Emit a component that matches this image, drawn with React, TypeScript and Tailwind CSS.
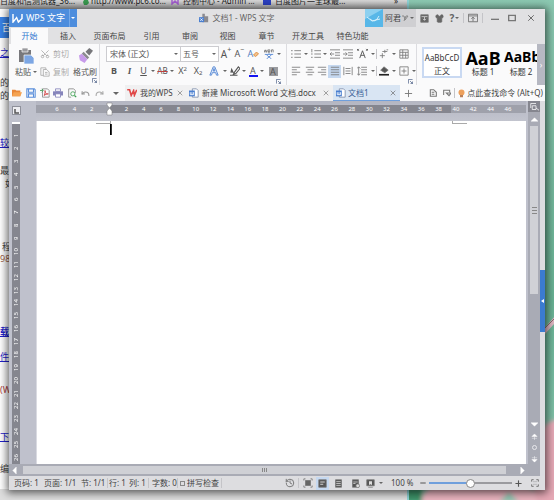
import React from "react";
import { History, Shirt, X, Plus, Minus, Scissors, Undo, Redo } from "lucide-react";

type Kids = { children?: React.ReactNode };

function Icon({ size = "size-[10px]", children }: Kids & { size?: string }) {
  return (
    <svg viewBox="0 0 12 12" className={`${size} shrink-0`} fill="none" stroke="#777" strokeWidth="1" aria-hidden="true">
      {children}
    </svg>
  );
}

function Caret() {
  return (
    <svg viewBox="0 0 4 2" className="h-[2px] w-[4px] shrink-0" aria-hidden="true">
      <path d="M0 0h4L2 2z" fill="#666" />
    </svg>
  );
}

function Tool({ w, label, active, children }: Kids & { w: string; label: string; active?: boolean }) {
  return (
    <button aria-label={label} className={`flex h-[13px] shrink-0 items-center justify-center ${w} ${active ? "bg-[#c5d8f0]" : ""}`}>
      {children}
    </button>
  );
}

function Drop({ label }: { label: string }) {
  return (
    <Tool w="w-[6px]" label={label}>
      <Caret />
    </Tool>
  );
}

function Rule() {
  return <span className="h-[10px] w-px shrink-0 bg-[#c4c4c8]" />;
}

function Launcher() {
  return (
    <Icon size="size-[5px]">
      <path d="M1 11V1h10M5 5l6 6M11 6v5H6" stroke="#5d6f92" strokeWidth="2" />
    </Icon>
  );
}

function Lines({ d, size = "size-[10px]" }: { d: string; size?: string }) {
  return (
    <Icon size={size}>
      <path d={d} stroke="#777" />
    </Icon>
  );
}

function WordDoc() {
  return (
    <Icon>
      <path d="M4 1h5l2 2v8H4z" fill="#fff" stroke="#7b8ba8" />
      <path d="M0 3h7v7H0z" fill="#4a7fd0" stroke="none" />
      <path d="M1.5 5v3h4V5M3.5 5v3" stroke="#fff" />
    </Icon>
  );
}

function Wallpaper() {
  return (
    <svg className="absolute inset-0 size-full" preserveAspectRatio="none" viewBox="0 0 554 500" aria-hidden="true">
      <defs>
        <linearGradient id="leaf" x1="0" y1="0" x2="0" y2="1">
          <stop offset="0" stopColor="#8cc9b2" />
          <stop offset="0.35" stopColor="#76b89d" />
          <stop offset="0.6" stopColor="#68b294" />
          <stop offset="0.85" stopColor="#80c1a8" />
        </linearGradient>
        <filter id="soft"><feGaussianBlur stdDeviation="2" /></filter>
      </defs>
      <rect width="554" height="500" fill="url(#leaf)" />
      <g filter="url(#soft)">
        <ellipse cx="480" cy="500" rx="58" ry="24" fill="#eab4bf" />
        <ellipse cx="556" cy="470" rx="24" ry="50" fill="#e6a9b6" />
        <path d="M400 488h22v14h-22z" fill="#3c9268" />
        <path d="M509 492l10 10h-20z" fill="#8cc4b0" />
      </g>
      <path d="M543 330l12-14v7l-10 11z" fill="#dfb8c3" />
      <path d="M545 328l9-9" stroke="#8c6a70" />
    </svg>
  );
}

const pageLines = [
  { text: "之套", cls: "mt-[9px] text-[#2222cc] underline" },
  { text: "的使", cls: "mt-[18px]" },
  { text: "的编", cls: "mt-px" },
  { text: "较全", cls: "mt-[35px] text-[#2222cc] underline" },
  { text: "最新", cls: "mt-[16px]" },
  { text: "如", cls: "mt-px pl-[5px]" },
  { text: "程", cls: "mt-[51px] pl-[2px]" },
  { text: "983", cls: "text-[#9b5c44]" },
  { text: "载", cls: "mt-[61px] font-bold text-[#2222cc] underline" },
  { text: "件大", cls: "mt-[13px] text-[#2222cc] underline" },
  { text: "(W", cls: "mt-[21px] text-[#b04040]" },
  { text: "下载", cls: "mt-[35px] text-[#2222cc] underline" },
  { text: "编辑", cls: "mt-[20px]" },
];

function Browser() {
  return (
    <div className="absolute inset-y-0 left-0 flex w-[409px] flex-col overflow-hidden border-r-2 border-[#8ed3d6] bg-white">
      <div className="flex h-[9px] shrink-0 items-start overflow-hidden whitespace-nowrap bg-linear-to-b from-[#d8d8d8] to-[#a8a8a8] leading-[10px] text-[#222]">
        <span className="-mt-1 w-[82px] shrink-0">百度和信测试器_36...</span>
        <svg viewBox="0 0 8 5" className="mr-px h-[5px] w-[8px] shrink-0" aria-hidden="true"><path d="M2 0h4l1 3-2 2H2L1 2z" fill="#3a9a50" /></svg>
        <span className="-mt-1 w-[80px] shrink-0">http://www.pc6.co...</span>
        <svg viewBox="0 0 8 5" className="mr-[4px] h-[5px] w-[8px] shrink-0" fill="none" stroke="#a45fd0" strokeWidth="1.500" aria-hidden="true"><path d="M1 0v4l3-3 3 3V0" /></svg>
        <span className="-mt-1 w-[80px] shrink-0">控制中心 - Admin ...</span>
        <span className="mr-[4px] h-[5px] w-[8px] shrink-0 bg-[#2b40c0]" />
        <span className="-mt-1 grow">百度图片—全球最...</span>
        <span className="-mt-1 pr-[9px]">»</span>
      </div>
      <div className="mt-[8px] h-[21px] w-[30px] shrink-0 bg-[#3a84e8] pl-[2px] text-[9px] leading-[21px] text-white">百</div>
      {pageLines.map((l) => (
        <div key={l.text} className={`h-[12px] shrink-0 text-[9px] leading-[12px] ${l.cls}`}>{l.text}</div>
      ))}
      <div className="mt-[14px] grow bg-[#dedede]" />
    </div>
  );
}

function TitleBar() {
  return (
    <header className="flex h-[18px] shrink-0 items-center">
      <button className="flex h-full w-[68px] shrink-0 items-center bg-[#4d8ddd] text-[9px] text-white">
        <svg viewBox="0 0 12 10" className="ml-[3px] h-[9px] w-[11px]" fill="none" stroke="#fff" strokeWidth="1.6" aria-hidden="true">
          <path d="M1 0v9l4-5 2 5 4-4V0" />
        </svg>
        <span className="ml-[3px] grow text-left">WPS 文字</span>
        <span className="flex h-full w-[8px] items-center border-l border-[#76a9e8]">
          <svg viewBox="0 0 4 2" className="ml-px h-[2px] w-[4px]" aria-hidden="true"><path d="M0 0h4L2 2z" fill="#fff" /></svg>
        </span>
      </button>
      <div className="flex grow items-center justify-center gap-[3px] pl-[32px] text-[#666]">
        <Icon>
          <path d="M4 4V1h3v3h4v7H4z" fill="#8a8a90" stroke="none" />
          <path d="M0 5h6v6H0z" fill="#4a7fd0" stroke="none" />
          <path d="M1.5 6.500l3 3m0-3l-3 3" stroke="#fff" />
        </Icon>
        <h1>文档1 - WPS 文字</h1>
      </div>
      <svg viewBox="0 0 18 18" className="h-full w-[18px] shrink-0" role="img" aria-label="头像">
        <path d="M0 0h18v18H0z" fill="#58b7e8" />
        <path d="M0 0h18L0 10z" fill="#8dd0f0" />
        <path d="M2 8l5 4 8-2M5 10q5 5 9-3" stroke="#d6f1fc" fill="none" />
      </svg>
      <button className="flex h-full w-[33px] shrink-0 items-center justify-center gap-px bg-[#cfcfd2]">
        <span>阿君</span>
        <svg viewBox="0 0 7 7" className="size-[7px]" fill="none" stroke="#888" aria-hidden="true"><path d="M0 1h2l1 4 3-4H4L2 6" /></svg>
        <Caret />
      </button>
      <Tool w="w-[16px]" label="云同步">
        <Icon size="size-[9px]"><path d="M1 1h10v10H1z" fill="#666" /><path d="M2 3.500h8M6 4v4M4 6.500l2 2 2-2" stroke="#e1e1e3" /></Icon>
      </Tool>
      <Tool w="w-[14px]" label="皮肤"><Shirt size={9} fill="#666" color="#666" /></Tool>
      <button className="flex w-[17px] shrink-0 items-center justify-center gap-px text-[10px] font-bold text-[#666]" aria-label="帮助">?<Caret /></button>
      <Rule />
      <Tool w="w-[18px]" label="隐藏功能区">
        <Icon><path d="M0.500 1.500h11v9h-11zM1 3.500h10M6 10V5M4 7l2-2 2 2" stroke="#666" /></Icon>
      </Tool>
      <Rule />
      <Tool w="w-[24px]" label="最小化"><Icon size="size-[8px]"><path d="M0 8h12" strokeWidth="2" /></Icon></Tool>
      <Tool w="w-[10px]" label="最大化"><Icon size="size-[8px]"><path d="M1 2h10v8H1z" strokeWidth="2" /></Icon></Tool>
      <Tool w="w-[28px]" label="关闭"><X size={10} color="#555" /></Tool>
    </header>
  );
}

const menus = [
  { name: "插入", w: "w-[40px]" },
  { name: "页面布局", w: "w-[43px]" },
  { name: "引用", w: "w-[41px]" },
  { name: "审阅", w: "w-[36px]" },
  { name: "视图", w: "w-[39px]" },
  { name: "章节", w: "w-[39px]" },
  { name: "开发工具", w: "w-[44px]" },
  { name: "特色功能", w: "w-[45px]" },
];

function Menu() {
  return (
    <nav className="flex h-[17px] shrink-0 items-stretch pl-[2px]">
      <button className="mt-px w-[37px] bg-[#fafafb] text-[#2f76cf]">开始</button>
      {menus.map((m) => (
        <button key={m.name} className={`mt-px shrink-0 whitespace-nowrap ${m.w}`}>{m.name}</button>
      ))}
    </nav>
  );
}

function Ribbon() {
  return (
    <section className="flex h-[41px] shrink-0 bg-[#fafafb] text-[#555]">
      <div className="flex w-[91px] shrink-0 flex-col items-end border-r border-[#dcdce0]">
        <div className="flex h-[34px] w-full pl-[3px] pt-[4px]">
          <button className="flex w-[28px] shrink-0 flex-col items-center justify-between">
            <svg viewBox="0 0 16 16" className="size-[16px]" aria-hidden="true">
              <path d="M1 2h12v12H1z" fill="#78787c" /><path d="M4 0h6v4H4z" fill="#9a9a9e" stroke="#fafafb" strokeWidth=".7" />
              <path d="M6 7h7l3 3v6H6z" fill="#7ca6e4" stroke="#fafafb" strokeWidth=".7" />
            </svg>
            <span className="flex items-center gap-[2px] whitespace-nowrap leading-[12px]">粘贴<Caret /></span>
          </button>
          <div className="flex w-[31px] shrink-0 flex-col justify-between text-[#aaa]">
            <button className="flex items-center gap-[3px] whitespace-nowrap leading-[12px]"><Scissors size={10} className="-rotate-90" />剪切</button>
            <button className="flex items-center gap-[3px] whitespace-nowrap leading-[12px]">
              <Icon><path d="M4 10H1V1h6v2M4 3h4l3 3v5H4zM6 6.500h3M6 8.500h3" stroke="#aaa" /></Icon>复制
            </button>
          </div>
          <button className="flex w-[28px] shrink-0 flex-col items-center justify-between">
            <svg viewBox="0 0 16 16" className="size-[15px]" aria-hidden="true">
              <path d="M12 0l4 3-4 5-4-4z" fill="#77777b" /><path d="M6 4l6 6-2 2-6-6z" fill="#8c8c90" /><path d="M1 8l3-2 6 6-3 4-5-3z" fill="#c79bea" />
            </svg>
            <span className="whitespace-nowrap leading-[12px]">格式刷</span>
          </button>
        </div>
        <span className="mr-[2px]"><Launcher /></span>
      </div>

      <div className="flex w-[187px] shrink-0 flex-col items-end border-r border-[#dcdce0] pl-[6px]">
        <div className="flex h-[19px] w-full items-center">
          <label className="flex h-[16px] w-[75px] shrink-0 items-center border border-[#ccccd0] bg-white pr-[2px]">
            <select aria-label="字体" className="min-w-0 grow appearance-none pl-[3px]"><option>宋体 (正文)</option></select><Caret />
          </label>
          <label className="flex h-[16px] w-[38px] shrink-0 items-center border border-l-0 border-[#ccccd0] bg-white pr-[2px]">
            <select aria-label="字号" className="min-w-0 grow appearance-none pl-[2px]"><option>五号</option></select><Caret />
          </label>
          <Tool w="w-[14px]" label="增大字号"><span className="text-[10px]">A</span><sup className="text-[7px]">+</sup></Tool>
          <Tool w="w-[13px]" label="减小字号"><span className="text-[9px]">A</span><sup className="text-[7px]">−</sup></Tool>
          <Tool w="w-[15px]" label="清除格式">
            <span className="text-[9px] text-[#557fc0]">A</span>
            <Icon size="size-[6px]"><path d="M1 8l6-6 4 4-6 5z" fill="#f3c18a" stroke="#e0934a" strokeWidth="2" /></Icon>
          </Tool>
          <Tool w="w-[15px]" label="拼音指南">
            <Icon>
              <path d="M0 1l1 3 1-3 1 3 1-3M5 3h2V1H5v3h2M9 4V1h2v3" stroke="#777" />
              <path d="M1 6.500h10M6 5v1M3 7l6 5M9 7l-6 5" stroke="#4a7fd0" />
            </Icon>
          </Tool>
          <Drop label="拼音选项" />
        </div>
        <div className="flex h-[16px] w-full items-center text-[9px]">
          <Tool w="w-[16px]" label="加粗"><b>B</b></Tool>
          <Tool w="w-[15px]" label="倾斜"><i className="font-['Liberation_Serif',serif] font-bold">I</i></Tool>
          <Tool w="w-[13px]" label="下划线"><span className="underline">U</span></Tool>
          <Drop label="下划线样式" />
          <Tool w="w-[13px]" label="删除线"><span className="text-[8px] line-through decoration-[#c04040]">AB</span></Tool>
          <Drop label="删除线选项" />
          <Tool w="w-[15px]" label="上标">X<span className="mb-[4px] text-[6px]">2</span></Tool>
          <Tool w="w-[16px]" label="下标">X<span className="mt-[4px] text-[6px]">2</span></Tool>
          <Tool w="w-[16px]" label="文字效果">
            <Icon><path d="M1 11L5 1h2l4 10H9L8 8H4l-1 3z M5 6h2L6 3z" stroke="#4a7fd0" fill="#dfeafb" /></Icon>
          </Tool>
          <Drop label="文字效果选项" />
          <Tool w="w-[13px]" label="突出显示">
            <Icon><path d="M5 8l5-7 2 2-5 6-3 1zM1 8l1-4 2 4M1 7h3M0 11h9" strokeWidth="1.300" stroke="#555" /></Icon>
          </Tool>
          <Drop label="突出显示颜色" />
          <Tool w="w-[12px]" label="字体颜色"><span className="h-[11px] w-[9px] border-b-2 border-[#1515f0] text-center leading-[9px]">A</span></Tool>
          <Drop label="字体颜色选项" />
          <Tool w="w-[16px]" label="字符底纹"><span className="size-[9px] bg-[#9a9b9f] text-center leading-[9px]">A</span></Tool>
        </div>
        <span className="mr-[5px]"><Launcher /></span>
      </div>

      <div className="flex w-[130px] shrink-0 flex-col items-end border-r border-[#dcdce0] pl-[2px]">
        <div className="flex h-[19px] w-full items-center">
          <Tool w="w-[14px]" label="项目符号"><Lines d="M0 2h2M4 2h8M0 6h2M4 6h8M0 10h2M4 10h8" /></Tool>
          <Drop label="项目符号选项" />
          <Tool w="w-[13px]" label="编号"><Lines d="M1 0v4M4 2h8M0 6h2M4 6h8M0 10h2M4 10h8" /></Tool>
          <Drop label="编号选项" />
          <Tool w="w-[14px]" label="减少缩进"><Lines d="M0 1h12M6 4.500h6M6 7.500h6M0 11h12M0 6h5M2 4L0 6l2 2" /></Tool>
          <Tool w="w-[12px]" label="增加缩进"><Lines d="M0 1h12M6 4.500h6M6 7.500h6M0 11h12M0 6h5M3 4l2 2-2 2" /></Tool>
          <Tool w="w-[16px]" label="中文版式"><Icon size="size-[11px]"><path d="M3 11L6 3l3 8M4 8h4M0 1l2 2M12 1l-2 2M0 3l2-2M12 3l-2-2" stroke="#555" /></Icon></Tool>
          <Drop label="中文版式选项" />
          <Rule />
          <Tool w="w-[14px]" label="显示标记"><Lines d="M7 1v4M4 3h6M4 5v6M1 8h6M9 1h2" /></Tool>
          <Drop label="显示标记选项" />
          <Tool w="w-[14px]" label="表格"><Lines d="M1 1h10v10H1zM1 4h10M1 7.500h10M4.500 1v10M8 4v7" /></Tool>
        </div>
        <div className="flex h-[16px] w-full items-center">
          <Tool w="w-[14px]" label="左对齐"><Lines d="M1 1.500h10M1 4.500h6M1 7.500h10M1 10.500h6" /></Tool>
          <Tool w="w-[13px]" label="居中"><Lines d="M1 1.500h10M3 4.500h6M1 7.500h10M3 10.500h6" /></Tool>
          <Tool w="w-[12px]" label="右对齐"><Lines d="M1 1.500h10M5 4.500h6M1 7.500h10M5 10.500h6" /></Tool>
          <Tool w="w-[13px]" label="两端对齐" active><Lines d="M1 1.500h10M1 4.500h10M1 7.500h10M1 10.500h10" /></Tool>
          <Tool w="w-[13px]" label="分散对齐"><Lines d="M1 1v10M11 1v10M3 3h6M3 9h6M3 6h6" /></Tool>
          <Tool w="w-[16px]" label="行距"><Lines d="M5 1.500h7M5 4.500h7M5 7.500h7M5 10.500h7M2 1v10M0 3l2-2 2 2M0 9l2 2 2-2" /></Tool>
          <Drop label="行距选项" />
          <Rule />
          <Tool w="w-[14px]" label="底纹颜色"><Icon><path d="M2 5l4-4 5 4-4 3z" fill="#555" /><path d="M0 10.500h12" stroke="#222" strokeWidth="2" /></Icon></Tool>
          <Drop label="底纹选项" />
          <Tool w="w-[14px]" label="边框"><Lines d="M1 1h10v10H1zM6 3v6M3 6h6" /></Tool>
          <Drop label="边框选项" />
        </div>
        <span className="mr-[3px]"><Launcher /></span>
      </div>

      <div className="flex min-w-0 grow items-start gap-[2px] overflow-hidden pl-[5px] pt-[3px] text-black">
        <button className="flex h-[31px] w-[40px] shrink-0 flex-col items-center border-2 border-[#c9d9f2] bg-white text-[#333]">
          <span className="h-[17px] leading-[17px]">AaBbCcD</span><span className="leading-[10px]">正文</span>
        </button>
        <button className="flex w-[38px] shrink-0 flex-col items-center whitespace-nowrap">
          <b className="h-[19px] text-[18px] leading-[22px]">AaB</b><span className="leading-[12px] text-[#333]">标题 1</span>
        </button>
        <button className="flex w-[34px] shrink-0 flex-col items-center whitespace-nowrap">
          <b className="h-[19px] w-full overflow-hidden text-left text-[14px] leading-[19px]">AaBb</b><span className="leading-[12px] text-[#333]">标题 2</span>
        </button>
      </div>
      <button aria-label="更多样式" className="flex w-[8px] shrink-0 items-center justify-center bg-[#b6b8c2] text-white">›</button>
    </section>
  );
}

function DocTabs() {
  return (
    <div className="flex h-[16px] shrink-0 items-center bg-[#fafafb]">
      <Tool w="w-[15px]" label="打开"><Icon><path d="M0 2h4l1 1h5v7H0z" fill="#e8883a" stroke="none" /><path d="M2 5h10l-2 5H0z" fill="#f5a352" stroke="none" /></Icon></Tool>
      <Tool w="w-[14px]" label="保存"><Icon><path d="M1 1h9l1 1v9H1zM3 1v4h6V1M3 11V7h6v4" stroke="#5b8fdb" strokeWidth="1.300" /></Icon></Tool>
      <Tool w="w-[13px]" label="输出为PDF"><Icon><path d="M3 1h6l2 2v8H3z" stroke="#888" /><path d="M5 9q2-5 1-6 0 5 4 4-3 0-5 2" stroke="#d04040" /><path d="M0 3h3M2 1l2 2-2 2" stroke="#3c9f50" /></Icon></Tool>
      <Tool w="w-[14px]" label="打印"><Icon><path d="M3 1h6v3H3z" stroke="#8584bb" /><path d="M0 4h12v5H0z" fill="#8584bb" stroke="none" /><path d="M3 7h6v4H3z" fill="#fff" stroke="#8584bb" /></Icon></Tool>
      <Tool w="w-[13px]" label="打印预览"><Icon><path d="M10 6V3L8 1H2v10h3" stroke="#888" /><circle cx="7" cy="7" r="2.500" stroke="#3c9f50" /><path d="M9 9l2 2" stroke="#3c9f50" strokeWidth="1.500" /></Icon></Tool>
      <Tool w="w-[14px]" label="撤销"><Undo size={9} color="#999" strokeWidth={3} /></Tool>
      <Tool w="w-[14px]" label="恢复"><Redo size={9} color="#aaa" strokeWidth={3} /></Tool>
      <Tool w="w-[19px]" label="自定义快速访问"><svg viewBox="0 0 6 3" className="h-[3px] w-[6px]" aria-hidden="true"><path d="M0 0h6L3 3z" fill="#666" /></svg></Tool>
      <div className="flex h-full w-[60px] shrink-0 items-center bg-[#f0f0f1] pl-[2px]">
        <svg viewBox="0 0 12 10" className="h-[8px] w-[10px]" fill="none" stroke="#e04848" strokeWidth="2" aria-hidden="true"><path d="M0 1h3l2 7 3-6 1 6 3-7" /></svg>
        <span className="grow whitespace-nowrap pl-[3px]">我的WPS</span>
        <Tool w="w-[10px]" label="关闭我的WPS"><X size={8} color="#777" /></Tool>
      </div>
      <div className="flex h-full w-[148px] shrink-0 items-center bg-[#f0f0f1] pl-[4px]">
        <WordDoc />
        <span className="grow whitespace-nowrap pl-[3px]">新建 Microsoft Word 文档.docx</span>
        <Tool w="w-[14px]" label="关闭新建文档"><X size={8} color="#777" /></Tool>
      </div>
      <div className="flex h-full w-[67px] shrink-0 items-center border-b border-[#6f9fdc] bg-[#d9e5f3] pl-[3px]">
        <WordDoc />
        <span className="grow whitespace-nowrap pl-[2px] text-[#3a5f95]">文档1</span>
        <Tool w="w-[14px]" label="关闭文档1"><X size={8} color="#666" /></Tool>
      </div>
      <Tool w="w-[17px]" label="新建标签"><Plus size={11} color="#777" /></Tool>
      <span className="grow" />
      <Tool w="w-[14px]" label="文档列表"><Icon size="size-[8px]"><path d="M2 1h5l4 4v6H2zM4 5h4M4 8h4" strokeWidth="1.600" /></Icon></Tool>
      <Tool w="w-[14px]" label="窗口"><Icon size="size-[8px]"><path d="M1 9V2h9v3M5 6h7L9 10z" strokeWidth="1.600" /></Icon></Tool>
      <Rule />
      <button className="flex shrink-0 items-center gap-px whitespace-nowrap pl-[2px] pr-[2px]">
        <Icon size="size-[9px]"><circle cx="6" cy="4.500" r="4" fill="#eda05c" stroke="none" /><path d="M4 8h4v3H4z" fill="#b9805a" stroke="none" /></Icon>
        点此查找命令 (Alt+Q)
      </button>
    </div>
  );
}

const across = ["6", "4", "2", "", "2", "4", "6", "8", "10", "12", "14", "16", "18", "20", "22", "24", "26", "28", "30", "32", "34", "36", "38", "40", "42", "44", "46"];
const down = Array.from({ length: 26 }, (_, i) => i + 1);

function Arrow({ d, label, h = "h-[12px]" }: { d: string; label: string; h?: string }) {
  return (
    <button aria-label={label} className={`flex w-[11px] shrink-0 items-center justify-center ${h}`}>
      <svg viewBox="0 0 8 8" className="size-[7px]" fill="#fff" stroke="#fff" strokeWidth="0.500" aria-hidden="true"><path d={d} /></svg>
    </button>
  );
}

function Workspace() {
  return (
    <main className="flex min-h-0 grow bg-[#bfc1cc]">
      <div className="flex min-w-0 grow flex-col">
        <div className="flex min-h-0 grow">
          <div className="flex w-[27px] shrink-0 flex-col pl-[3px] pt-[5px]">
            <button aria-label="制表符" className="flex size-[9px] shrink-0 items-end justify-center border border-[#8f919b] bg-[#eeeef2]">
              <svg viewBox="0 0 6 6" className="size-[6px]" fill="none" stroke="#555" strokeWidth="1.500" aria-hidden="true"><path d="M1 1v4h4" /></svg>
            </button>
            <div className="mt-[7px] flex min-h-0 w-[8px] grow flex-col items-center justify-between border-t-2 border-white bg-[#85868f] pb-[2px] pt-[7px]">
              {down.map((n) => (
                <span key={n} className="flex h-[9px] w-[8px] rotate-180 items-center justify-center text-[6px] leading-[8px] text-white [writing-mode:vertical-rl]">{n}</span>
              ))}
            </div>
          </div>
          <div className="flex min-w-0 grow flex-col pr-[2px]">
            <div className="flex h-[20px] shrink-0 items-start bg-linear-to-b from-[#b4b6c2] to-[#c2c4ce] pt-[4px]">
              <div className="flex h-[8px] grow items-center justify-between bg-[linear-gradient(to_right,#9fa1ab_74px,#85868f_74px,#85868f_calc(100%_-_75px),#9fa1ab_calc(100%_-_75px))] pl-[17px] pr-[14px]">
                {across.map((n, i) =>
                  n ? (
                    <span key={i} className="flex w-[8px] justify-center text-[6px] leading-[8px] text-white">{n}</span>
                  ) : (
                    <svg key={i} viewBox="0 0 8 14" className="h-[14px] w-[8px]" fill="#fff" stroke="#777" strokeWidth="0.500" aria-hidden="true">
                      <path d="M2 1h5v2L4.500 6 2 3zM4.500 6L7 9v4H2V9z" />
                    </svg>
                  ),
                )}
              </div>
            </div>
            <article aria-label="文档页面" className="flex grow items-start border-l border-[#d9dae1] bg-white">
              <div className="ml-[59px] mt-[2px] h-px w-[14px] shrink-0 bg-[#aaa]" />
              <div className="h-[14px] w-px shrink-0 border-t-[3px] border-[#aaa] bg-black" />
              <div className="h-[14px] w-px shrink-0 border-t-[3px] border-white bg-[#333]" />
              <span className="grow" />
              <div className="mr-[59px] h-[3px] w-[15px] border-b border-l border-[#aaa]" />
            </article>
          </div>
        </div>
        <div className="flex h-[12px] shrink-0 items-center bg-[#a9abb5]">
          <Arrow d="M6 0v8L2 4z" label="向左滚动" />
          <div className="ml-[3px] flex h-[8px] grow items-center justify-center gap-px bg-[#cfd0d5]">
            <i className="h-[4px] w-px bg-[#888]" /><i className="h-[4px] w-px bg-[#888]" /><i className="h-[4px] w-px bg-[#888]" />
          </div>
          <span className="w-[11px]" />
          <Arrow d="M2 0v8l4-4z" label="向右滚动" />
        </div>
      </div>
      <div className="flex w-[12px] shrink-0 flex-col items-center bg-[#a9abb5]">
        <button aria-label="标尺" className="flex h-[11px] w-full shrink-0 items-center justify-center bg-[#85868f]">
          <Icon size="size-[9px]"><path d="M1 8V2h7M3 5h5v5H3zM8 8l4 3" stroke="#fff" /></Icon>
        </button>
        <Arrow d="M0 6h8L4 2z" label="向上滚动" h="h-[14px]" />
        <div className="flex h-[168px] w-[8px] shrink-0 flex-col items-center justify-center gap-[2px] bg-[#d0d1d6]">
          <i className="h-px w-[5px] bg-[#888]" /><i className="h-px w-[5px] bg-[#888]" /><i className="h-px w-[5px] bg-[#888]" />
        </div>
        <span className="grow" />
        <Arrow d="M0 2h8L4 6z" label="向下滚动" />
        <Arrow d="M1 4h6L4 1zM1 6h6M4 4v4" label="上一页" />
        <button aria-label="选择浏览对象" className="my-[3px] size-[5px] shrink-0 rounded-full border border-[#e8e8ec]" />
        <Arrow d="M1 4h6L4 7zM1 2h6M4 0v4" label="下一页" />
        <span className="h-[11px] shrink-0" />
      </div>
      <div className="w-[5px] shrink-0 bg-[#dcdce0] pt-[169px]">
        <button aria-label="展开任务窗格" className="flex h-[62px] w-full items-center justify-center bg-[#3b7bd0]">
          <svg viewBox="0 0 3 4" className="h-[4px] w-[3px]" aria-hidden="true"><path d="M3 0v4L0 2z" fill="#fff" /></svg>
        </button>
      </div>
    </main>
  );
}

function StatusBar() {
  return (
    <footer className="flex h-[14px] shrink-0 items-center whitespace-nowrap bg-[#dddde0] pl-[5px] text-[#444]">
      <span className="w-[30px]">页码: 1</span>
      <span className="w-[37px]">页面: 1/1</span>
      <span className="w-[26px]">节: 1/1</span>
      <Rule />
      <span className="w-[21px] pl-px">行: 1</span>
      <span className="w-[19px]">列: 1</span>
      <Rule />
      <span className="w-[28px] pl-[3px]">字数: 0</span>
      <Rule />
      <label className="flex items-center gap-[2px] px-[2px]">
        <input type="checkbox" className="size-[5px] appearance-none border border-[#888]" />拼写检查
      </label>
      <Rule />
      <span className="grow" />
      <Tool w="w-[17px]" label="历史"><History size={10} color="#666" /></Tool>
      <Rule />
      <Tool w="w-[17px]" label="全屏"><Icon><path d="M3 3h6v6H3z" fill="#666" /><path d="M1 3V1h2M9 1h2v2M11 9v2H9M3 11H1V9" /></Icon></Tool>
      <Tool w="w-[13px]" label="页面视图" active><Icon size="size-[9px]"><path d="M1 1h10v10H1z" fill="#555" /><path d="M3 4h6M3 7h4" stroke="#fff" /></Icon></Tool>
      <Tool w="w-[19px]" label="大纲视图"><Icon size="size-[9px]"><path d="M2 1h8v10H2z" fill="#555" /><path d="M3 3.500h6M3 6h6M3 8.500h6" stroke="#ddd" /></Icon></Tool>
      <Tool w="w-[14px]" label="网页视图"><Icon size="size-[9px]"><path d="M2 1h8v10H2z" fill="#555" /><path d="M3 4h6M3 6h3" stroke="#ddd" /><circle cx="9" cy="9" r="2.500" fill="#ddd" /></Icon></Tool>
      <Tool w="w-[16px]" label="阅读视图"><Icon size="size-[9px]"><path d="M1 1h10v8H1z" fill="#555" /><path d="M4 3h4v5L6 7 4 8z" fill="#ddd" stroke="none" /><path d="M3 11h6" /></Icon></Tool>
      <Drop label="视图选项" />
      <span className="w-[32px] pl-[7px]">100 %</span>
      <Tool w="w-[13px]" label="缩小"><Minus size={8} color="#555" strokeWidth={3} /></Tool>
      <input
        type="range"
        aria-label="显示比例"
        defaultValue={50}
        className="h-[10px] w-[83px] appearance-none bg-[linear-gradient(to_right,#6f9fdc_50%,#9a9a9e_50%)] bg-[length:100%_2px] bg-center bg-no-repeat [&::-webkit-slider-thumb]:size-[9px] [&::-webkit-slider-thumb]:appearance-none [&::-webkit-slider-thumb]:rounded-full [&::-webkit-slider-thumb]:border [&::-webkit-slider-thumb]:border-[#888] [&::-webkit-slider-thumb]:bg-white"
      />
      <Tool w="w-[13px]" label="放大"><Plus size={9} color="#555" strokeWidth={3} /></Tool>
      <Tool w="w-[20px]" label="适合页面"><Icon size="size-[8px]"><path d="M1 4V1h3M8 1h3v3M11 8v3H8M4 11H1V8M4 4h1M8 4H7M4 8h1M8 8H7" strokeWidth="1.500" /></Icon></Tool>
    </footer>
  );
}

export default function App() {
  return (
    <div className="relative h-screen overflow-hidden font-['Noto_Sans','Noto_Sans_CJK_SC',sans-serif] text-[8px] leading-[12px] text-[#444]">
      <Wallpaper />
      <Browser />
      <div className="absolute inset-x-[9px] bottom-[10px] top-[9px] flex flex-col bg-[#e1e1e3] shadow-[0_1px_8px_2px_rgba(0,0,0,0.6)]">
        <TitleBar />
        <Menu />
        <Ribbon />
        <DocTabs />
        <Workspace />
        <StatusBar />
      </div>
    </div>
  );
}
